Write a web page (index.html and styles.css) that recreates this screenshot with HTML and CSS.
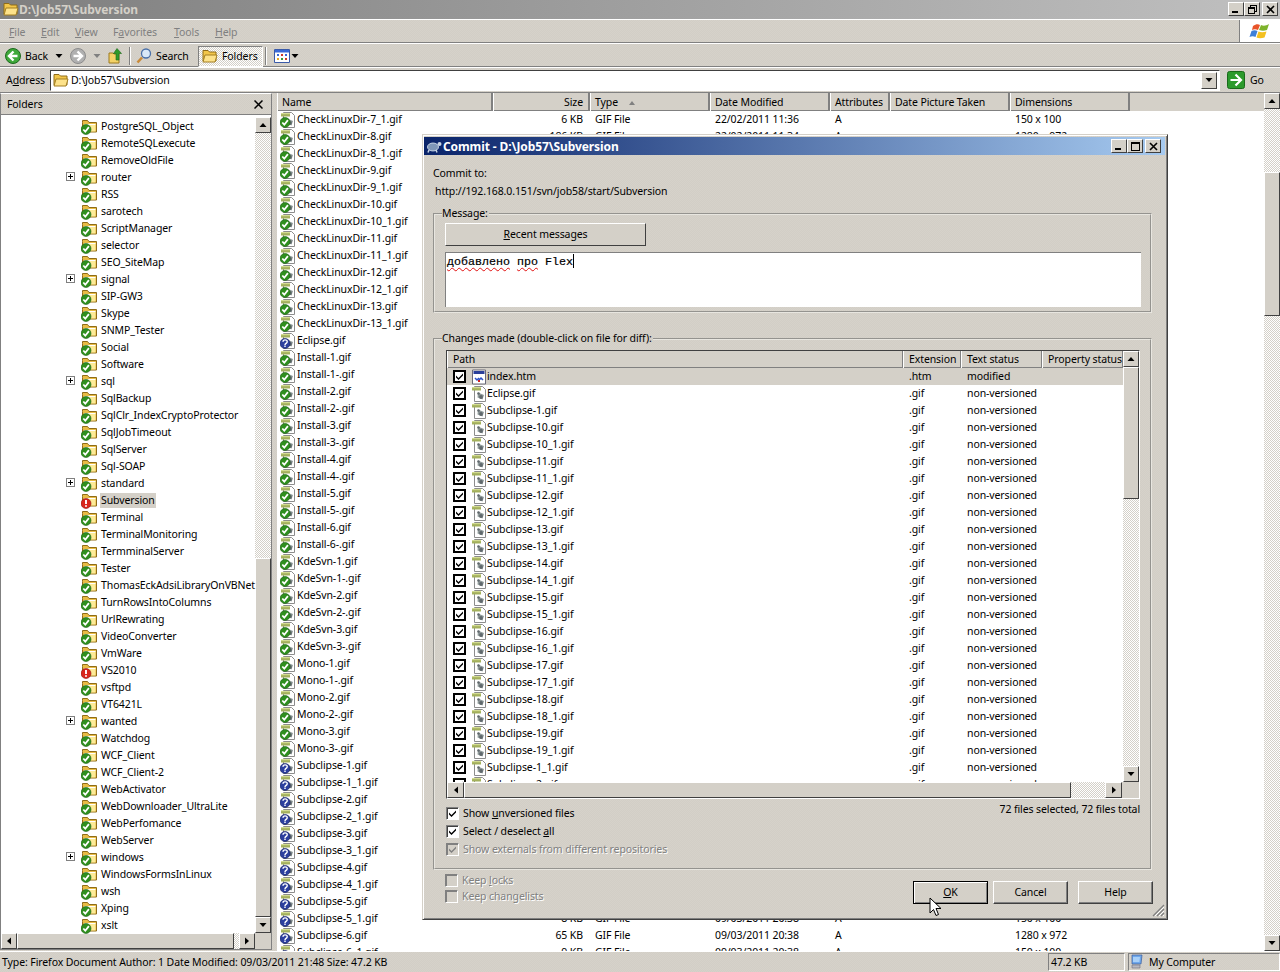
FILE: index.html
```html
<!DOCTYPE html>
<html lang="en">
<head>
<meta charset="utf-8">
<title>D:\Job57\Subversion</title>
<link rel="stylesheet" href="styles.css">
</head>
<body>
<svg class="defs" width="0" height="0">
  <symbol id="fold" viewBox="0 0 16 16"><path d="M1.500 3.500V1.500h5l1.500 2H15.500V13H1.500z" fill="#e9bc45" stroke="#8f6c18"/><path d="M3 5.500h11.500V12.500H3z" fill="#fdeb98"/><path d="M3 5.500h11.500" stroke="#fff"/></symbol>
  <symbol id="ok" viewBox="0 0 16 16"><circle cx="5" cy="10.500" r="5" fill="#2f8f1e" stroke="#1c5f14" stroke-width=".6"/><path d="M2.300 10.500l2 2.200 3.600-4.600" fill="none" stroke="#fff" stroke-width="1.800"/></symbol>
  <symbol id="err" viewBox="0 0 16 16"><circle cx="5" cy="10.500" r="5" fill="#d8261c" stroke="#8c120c" stroke-width=".6"/><path d="M5 7v4M5 12.200v1.500" stroke="#fff" stroke-width="1.900"/></symbol>
  <symbol id="q" viewBox="0 0 16 16"><circle cx="5" cy="10.500" r="5" fill="#2c3f9e" stroke="#16215f" stroke-width=".6"/><path d="M3 8.800c0-2.600 4.200-2.600 4.200-.1 0 1.600-2.200 1.700-2.200 3.200M5 12.500v1.500" fill="none" stroke="#fff" stroke-width="1.400"/></symbol>
  <symbol id="doc" viewBox="0 0 16 16"><path d="M3.500.5h8l3 3v12h-11z" fill="#fff" stroke="#8c8c8c"/><path d="M1 1h9v3.500H1z" fill="#a3b05c"/><path d="M1 1h9v1.200H1z" fill="#d3dc92"/><path d="M7 6.500l6 2.500-1.500 4.500-5-2z" fill="#8f9a9a"/><circle cx="10" cy="11" r="1.900" fill="#60686c"/><circle cx="7.500" cy="7.500" r="1.300" fill="#60686c"/></symbol>
  <symbol id="htm" viewBox="0 0 16 16"><path d="M1.500 1h13v14h-13z" fill="#fff" stroke="#6a6a78"/><path d="M2.500 2h11v3h-11z" fill="#2a3f9a"/><path d="M4 9l2 2 2-2M8 11l2-2 2 2" fill="none" stroke="#2a50c8" stroke-width="1.500"/><path d="M7 11h2v2h-2z" fill="#d02020"/></symbol>
  <symbol id="check" viewBox="0 0 9 9"><path d="M1 3.500l2.500 2.500L8 1.500v2L3.500 8 1 5.500z"/></symbol>
  <symbol id="yf" viewBox="0 0 16 16"><path d="M1 4V2.500h5L7.500 4H14V13H1z" fill="#f2c64a" stroke="#8f6c18"/><path d="M1 14l2-7h12l-2 7z" fill="#fde28a" stroke="#a37f22"/></symbol>
  <symbol id="up" viewBox="0 0 8 8"><path d="M4 2l3.500 4H.5z"/></symbol>
  <symbol id="dn" viewBox="0 0 8 8"><path d="M4 6L.5 2h7z"/></symbol>
  <symbol id="lf" viewBox="0 0 8 8"><path d="M2 4l4-3.500v7z"/></symbol>
  <symbol id="rt" viewBox="0 0 8 8"><path d="M6 4L2 .5v7z"/></symbol>
</svg>

<div class="app">
  <div class="title">
    <svg class="i16"><use href="#yf"/></svg>
    <span class="title-text">D:\Job57\Subversion</span>
    <span class="wbtns">
      <span class="wbtn"><i class="min"></i></span>
      <span class="wbtn"><i class="rest"></i></span>
      <span class="wbtn wclose"><svg width="9" height="9" viewBox="0 0 9 9"><path d="M1 1l7 7M8 1L1 8" stroke="#000" stroke-width="1.600"/></svg></span>
    </span>
  </div>

  <div class="menu">
    <span class="m m1"><u>F</u>ile</span>
    <span class="m m2"><u>E</u>dit</span>
    <span class="m m3"><u>V</u>iew</span>
    <span class="m m4">F<u>a</u>vorites</span>
    <span class="m m5"><u>T</u>ools</span>
    <span class="m m6"><u>H</u>elp</span>
    <span class="flag"><svg width="22" height="20" viewBox="0 0 22 20"><path d="M4 5c3-2 5-2 7-1l-2 5c-2-1-4-1-6 0z" fill="#e8542a"/><path d="M12 4c2 1 5 1 8-1l-2 6c-3 1-5 1-8 0z" fill="#7eb32c"/><path d="M2.500 10c2-1 4-1 6 0l-2 6c-2-1-4-1-6 0z" fill="#3e7fd8"/><path d="M9.500 10.500c2 1 5 1 8 0l-2 6c-3 1-6 1-8 0z" fill="#f4c020"/></svg></span>
  </div>

  <div class="tool">
    <svg class="i16 t-back" viewBox="0 0 16 16"><circle cx="8" cy="8" r="7.500" fill="#3fa83a" stroke="#1d6a1d"/><path d="M8.500 3.500L4 8l4.500 4.500M4.500 8H12.500" fill="none" stroke="#fff" stroke-width="2.400"/></svg>
    <span class="t-backlabel">Back</span>
    <svg class="arrow t-a1"><use href="#dn"/></svg>
    <svg class="i16 t-fwd" viewBox="0 0 16 16"><circle cx="8" cy="8" r="7.500" fill="#b0b0b0" stroke="#8c8c8c"/><path d="M7.500 3.500L12 8l-4.500 4.500M11.500 8H3.500" fill="none" stroke="#fff" stroke-width="2.400"/></svg>
    <svg class="arrow dim t-a2"><use href="#dn"/></svg>
    <svg class="i16 t-up" viewBox="0 0 16 16"><path d="M1 5h4l1 1h5v9H1z" fill="#f4d266" stroke="#9c7b20"/><path d="M9 .5l4.500 5H11V12H8V5.500H5.500z" fill="#2f9a2a" stroke="#1b6a18" stroke-width=".6"/></svg>
    <i class="sep s1"></i>
    <svg class="i16 t-search" viewBox="0 0 16 16"><path d="M6 9.500L1.500 14.500" stroke="#c98b3a" stroke-width="2.600"/><circle cx="10" cy="5.500" r="4.500" fill="#d8e8f8" stroke="#4a70a8" stroke-width="1.300"/></svg>
    <span class="t-searchlabel">Search</span>
    <span class="pressed"><svg class="i16" viewBox="0 0 16 16"><use href="#yf"/></svg><span>Folders</span></span>
    <i class="sep s2"></i>
    <svg class="i16 t-views" viewBox="0 0 16 16"><path d="M.5 1.500h15v13H.5z" fill="#fff" stroke="#3a5aa8"/><path d="M1 2h14v2.500H1z" fill="#3a6ad8"/><path d="M3 6h2v2H3z" fill="#3a6ad8"/><path d="M7 6h2v2H7z" fill="#d03a2a"/><path d="M11 6h2v2h-2z" fill="#3a6ad8"/><path d="M3 10h2v2H3z" fill="#e8a820"/><path d="M7 10h2v2H7z" fill="#3a9a3a"/><path d="M11 10h2v2h-2z" fill="#d03a2a"/></svg>
    <svg class="arrow t-a3"><use href="#dn"/></svg>
  </div>

  <div class="addr">
    <span class="addr-label">A<u>d</u>dress</span>
    <div class="combo">
      <svg class="i16"><use href="#yf"/></svg>
      <span class="combo-text">D:\Job57\Subversion</span>
      <span class="btn3 combo-btn"><svg class="arrow"><use href="#dn"/></svg></span>
    </div>
    <svg class="go-ic" viewBox="0 0 18 18"><rect x=".5" y=".5" width="17" height="17" rx="2" fill="#2c9a2c" stroke="#1a6a1a"/><path d="M8.500 3.500L14 9l-5.500 5.500M13 9H3.500" fill="none" stroke="#fff" stroke-width="2.200"/></svg>
    <span class="go-label">Go</span>
  </div>

  <div class="main">
    <div class="left">
      <div class="left-head"><span>Folders</span><svg width="9" height="9" viewBox="0 0 9 9"><path d="M.5.5l8 8M8.500.5l-8 8" stroke="#000" stroke-width="1.500"/></svg></div>
      <div class="left-body">
        <div class="tree-wrap">
          <ul class="tree">
            <li><svg class="fi"><use href="#fold"/><use href="#ok"/></svg>PostgreSQL_Object</li>
            <li><svg class="fi"><use href="#fold"/><use href="#ok"/></svg>RemoteSQLexecute</li>
            <li><svg class="fi"><use href="#fold"/><use href="#ok"/></svg>RemoveOldFile</li>
            <li><b class="plus"></b><svg class="fi"><use href="#fold"/><use href="#ok"/></svg>router</li>
            <li><svg class="fi"><use href="#fold"/><use href="#ok"/></svg>RSS</li>
            <li><svg class="fi"><use href="#fold"/><use href="#ok"/></svg>sarotech</li>
            <li><svg class="fi"><use href="#fold"/><use href="#ok"/></svg>ScriptManager</li>
            <li><svg class="fi"><use href="#fold"/><use href="#ok"/></svg>selector</li>
            <li><svg class="fi"><use href="#fold"/><use href="#ok"/></svg>SEO_SiteMap</li>
            <li><b class="plus"></b><svg class="fi"><use href="#fold"/><use href="#ok"/></svg>signal</li>
            <li><svg class="fi"><use href="#fold"/><use href="#ok"/></svg>SIP-GW3</li>
            <li><svg class="fi"><use href="#fold"/><use href="#ok"/></svg>Skype</li>
            <li><svg class="fi"><use href="#fold"/><use href="#ok"/></svg>SNMP_Tester</li>
            <li><svg class="fi"><use href="#fold"/><use href="#ok"/></svg>Social</li>
            <li><svg class="fi"><use href="#fold"/><use href="#ok"/></svg>Software</li>
            <li><b class="plus"></b><svg class="fi"><use href="#fold"/><use href="#ok"/></svg>sql</li>
            <li><svg class="fi"><use href="#fold"/><use href="#ok"/></svg>SqlBackup</li>
            <li><svg class="fi"><use href="#fold"/><use href="#ok"/></svg>SqlClr_IndexCryptoProtector</li>
            <li><svg class="fi"><use href="#fold"/><use href="#ok"/></svg>SqlJobTimeout</li>
            <li><svg class="fi"><use href="#fold"/><use href="#ok"/></svg>SqlServer</li>
            <li><svg class="fi"><use href="#fold"/><use href="#ok"/></svg>Sql-SOAP</li>
            <li><b class="plus"></b><svg class="fi"><use href="#fold"/><use href="#ok"/></svg>standard</li>
            <li><svg class="fi"><use href="#fold"/><use href="#err"/></svg><span class="sel">Subversion</span></li>
            <li><svg class="fi"><use href="#fold"/><use href="#ok"/></svg>Terminal</li>
            <li><svg class="fi"><use href="#fold"/><use href="#ok"/></svg>TerminalMonitoring</li>
            <li><svg class="fi"><use href="#fold"/><use href="#ok"/></svg>TermminalServer</li>
            <li><svg class="fi"><use href="#fold"/><use href="#ok"/></svg>Tester</li>
            <li><svg class="fi"><use href="#fold"/><use href="#ok"/></svg>ThomasEckAdsiLibraryOnVBNet</li>
            <li><svg class="fi"><use href="#fold"/><use href="#ok"/></svg>TurnRowsIntoColumns</li>
            <li><svg class="fi"><use href="#fold"/><use href="#ok"/></svg>UrlRewrating</li>
            <li><svg class="fi"><use href="#fold"/><use href="#ok"/></svg>VideoConverter</li>
            <li><svg class="fi"><use href="#fold"/><use href="#ok"/></svg>VmWare</li>
            <li><svg class="fi"><use href="#fold"/><use href="#err"/></svg>VS2010</li>
            <li><svg class="fi"><use href="#fold"/><use href="#ok"/></svg>vsftpd</li>
            <li><svg class="fi"><use href="#fold"/><use href="#ok"/></svg>VT6421L</li>
            <li><b class="plus"></b><svg class="fi"><use href="#fold"/><use href="#ok"/></svg>wanted</li>
            <li><svg class="fi"><use href="#fold"/><use href="#ok"/></svg>Watchdog</li>
            <li><svg class="fi"><use href="#fold"/><use href="#ok"/></svg>WCF_Client</li>
            <li><svg class="fi"><use href="#fold"/><use href="#ok"/></svg>WCF_Client-2</li>
            <li><svg class="fi"><use href="#fold"/><use href="#ok"/></svg>WebActivator</li>
            <li><svg class="fi"><use href="#fold"/><use href="#ok"/></svg>WebDownloader_UltraLite</li>
            <li><svg class="fi"><use href="#fold"/><use href="#ok"/></svg>WebPerfomance</li>
            <li><svg class="fi"><use href="#fold"/><use href="#ok"/></svg>WebServer</li>
            <li><b class="plus"></b><svg class="fi"><use href="#fold"/><use href="#ok"/></svg>windows</li>
            <li><svg class="fi"><use href="#fold"/><use href="#ok"/></svg>WindowsFormsInLinux</li>
            <li><svg class="fi"><use href="#fold"/><use href="#ok"/></svg>wsh</li>
            <li><svg class="fi"><use href="#fold"/><use href="#ok"/></svg>Xping</li>
            <li><svg class="fi"><use href="#fold"/><use href="#ok"/></svg>xslt</li>
          </ul>
          <div class="vsb vsb-left">
            <span class="btn3 sb"><svg class="arrow"><use href="#up"/></svg></span>
            <i class="track grow"></i>
            <i class="btn3 thumb th-left"></i>
            <span class="btn3 sb"><svg class="arrow"><use href="#dn"/></svg></span>
          </div>
        </div>
        <div class="hsb hsb-left">
          <span class="btn3 sb"><svg class="arrow"><use href="#lf"/></svg></span>
          <i class="btn3 thumb th-lh"></i>
          <i class="track grow"></i>
          <span class="btn3 sb"><svg class="arrow"><use href="#rt"/></svg></span>
          <i class="corner"></i>
        </div>
      </div>
    </div>

    <div class="right">
      <div class="list">
        <div class="cols head">
          <span>Name</span><span class="ar">Size</span><span class="sorted">Type<svg class="sort" viewBox="0 0 8 8"><path d="M4 2l3 4H1z"/></svg></span><span>Date Modified</span><span>Attributes</span><span>Date Picture Taken</span><span>Dimensions</span>
        </div>
        <div class="rows">
          <div class="cols row"><span class="nm"><svg class="fi"><use href="#doc"/><use href="#ok"/></svg>CheckLinuxDir-7_1.gif</span><span class="ar">6 KB</span><span>GIF File</span><span>22/02/2011 11:36</span><span>A</span><span></span><span>150 x 100</span></div>
          <div class="cols row"><span class="nm"><svg class="fi"><use href="#doc"/><use href="#ok"/></svg>CheckLinuxDir-8.gif</span><span class="ar">186 KB</span><span>GIF File</span><span>22/02/2011 11:34</span><span>A</span><span></span><span>1280 x 972</span></div>
          <div class="cols row"><span class="nm"><svg class="fi"><use href="#doc"/><use href="#ok"/></svg>CheckLinuxDir-8_1.gif</span></div>
          <div class="cols row"><span class="nm"><svg class="fi"><use href="#doc"/><use href="#ok"/></svg>CheckLinuxDir-9.gif</span></div>
          <div class="cols row"><span class="nm"><svg class="fi"><use href="#doc"/><use href="#ok"/></svg>CheckLinuxDir-9_1.gif</span></div>
          <div class="cols row"><span class="nm"><svg class="fi"><use href="#doc"/><use href="#ok"/></svg>CheckLinuxDir-10.gif</span></div>
          <div class="cols row"><span class="nm"><svg class="fi"><use href="#doc"/><use href="#ok"/></svg>CheckLinuxDir-10_1.gif</span></div>
          <div class="cols row"><span class="nm"><svg class="fi"><use href="#doc"/><use href="#ok"/></svg>CheckLinuxDir-11.gif</span></div>
          <div class="cols row"><span class="nm"><svg class="fi"><use href="#doc"/><use href="#ok"/></svg>CheckLinuxDir-11_1.gif</span></div>
          <div class="cols row"><span class="nm"><svg class="fi"><use href="#doc"/><use href="#ok"/></svg>CheckLinuxDir-12.gif</span></div>
          <div class="cols row"><span class="nm"><svg class="fi"><use href="#doc"/><use href="#ok"/></svg>CheckLinuxDir-12_1.gif</span></div>
          <div class="cols row"><span class="nm"><svg class="fi"><use href="#doc"/><use href="#ok"/></svg>CheckLinuxDir-13.gif</span></div>
          <div class="cols row"><span class="nm"><svg class="fi"><use href="#doc"/><use href="#ok"/></svg>CheckLinuxDir-13_1.gif</span></div>
          <div class="cols row"><span class="nm"><svg class="fi"><use href="#doc"/><use href="#q"/></svg>Eclipse.gif</span></div>
          <div class="cols row"><span class="nm"><svg class="fi"><use href="#doc"/><use href="#ok"/></svg>Install-1.gif</span></div>
          <div class="cols row"><span class="nm"><svg class="fi"><use href="#doc"/><use href="#ok"/></svg>Install-1-.gif</span></div>
          <div class="cols row"><span class="nm"><svg class="fi"><use href="#doc"/><use href="#ok"/></svg>Install-2.gif</span></div>
          <div class="cols row"><span class="nm"><svg class="fi"><use href="#doc"/><use href="#ok"/></svg>Install-2-.gif</span></div>
          <div class="cols row"><span class="nm"><svg class="fi"><use href="#doc"/><use href="#ok"/></svg>Install-3.gif</span></div>
          <div class="cols row"><span class="nm"><svg class="fi"><use href="#doc"/><use href="#ok"/></svg>Install-3-.gif</span></div>
          <div class="cols row"><span class="nm"><svg class="fi"><use href="#doc"/><use href="#ok"/></svg>Install-4.gif</span></div>
          <div class="cols row"><span class="nm"><svg class="fi"><use href="#doc"/><use href="#ok"/></svg>Install-4-.gif</span></div>
          <div class="cols row"><span class="nm"><svg class="fi"><use href="#doc"/><use href="#ok"/></svg>Install-5.gif</span></div>
          <div class="cols row"><span class="nm"><svg class="fi"><use href="#doc"/><use href="#ok"/></svg>Install-5-.gif</span></div>
          <div class="cols row"><span class="nm"><svg class="fi"><use href="#doc"/><use href="#ok"/></svg>Install-6.gif</span></div>
          <div class="cols row"><span class="nm"><svg class="fi"><use href="#doc"/><use href="#ok"/></svg>Install-6-.gif</span></div>
          <div class="cols row"><span class="nm"><svg class="fi"><use href="#doc"/><use href="#ok"/></svg>KdeSvn-1.gif</span></div>
          <div class="cols row"><span class="nm"><svg class="fi"><use href="#doc"/><use href="#ok"/></svg>KdeSvn-1-.gif</span></div>
          <div class="cols row"><span class="nm"><svg class="fi"><use href="#doc"/><use href="#ok"/></svg>KdeSvn-2.gif</span></div>
          <div class="cols row"><span class="nm"><svg class="fi"><use href="#doc"/><use href="#ok"/></svg>KdeSvn-2-.gif</span></div>
          <div class="cols row"><span class="nm"><svg class="fi"><use href="#doc"/><use href="#ok"/></svg>KdeSvn-3.gif</span></div>
          <div class="cols row"><span class="nm"><svg class="fi"><use href="#doc"/><use href="#ok"/></svg>KdeSvn-3-.gif</span></div>
          <div class="cols row"><span class="nm"><svg class="fi"><use href="#doc"/><use href="#ok"/></svg>Mono-1.gif</span></div>
          <div class="cols row"><span class="nm"><svg class="fi"><use href="#doc"/><use href="#ok"/></svg>Mono-1-.gif</span></div>
          <div class="cols row"><span class="nm"><svg class="fi"><use href="#doc"/><use href="#ok"/></svg>Mono-2.gif</span></div>
          <div class="cols row"><span class="nm"><svg class="fi"><use href="#doc"/><use href="#ok"/></svg>Mono-2-.gif</span></div>
          <div class="cols row"><span class="nm"><svg class="fi"><use href="#doc"/><use href="#ok"/></svg>Mono-3.gif</span></div>
          <div class="cols row"><span class="nm"><svg class="fi"><use href="#doc"/><use href="#ok"/></svg>Mono-3-.gif</span></div>
          <div class="cols row"><span class="nm"><svg class="fi"><use href="#doc"/><use href="#q"/></svg>Subclipse-1.gif</span></div>
          <div class="cols row"><span class="nm"><svg class="fi"><use href="#doc"/><use href="#q"/></svg>Subclipse-1_1.gif</span></div>
          <div class="cols row"><span class="nm"><svg class="fi"><use href="#doc"/><use href="#q"/></svg>Subclipse-2.gif</span></div>
          <div class="cols row"><span class="nm"><svg class="fi"><use href="#doc"/><use href="#q"/></svg>Subclipse-2_1.gif</span></div>
          <div class="cols row"><span class="nm"><svg class="fi"><use href="#doc"/><use href="#q"/></svg>Subclipse-3.gif</span></div>
          <div class="cols row"><span class="nm"><svg class="fi"><use href="#doc"/><use href="#q"/></svg>Subclipse-3_1.gif</span></div>
          <div class="cols row"><span class="nm"><svg class="fi"><use href="#doc"/><use href="#q"/></svg>Subclipse-4.gif</span></div>
          <div class="cols row"><span class="nm"><svg class="fi"><use href="#doc"/><use href="#q"/></svg>Subclipse-4_1.gif</span></div>
          <div class="cols row"><span class="nm"><svg class="fi"><use href="#doc"/><use href="#q"/></svg>Subclipse-5.gif</span></div>
          <div class="cols row"><span class="nm"><svg class="fi"><use href="#doc"/><use href="#q"/></svg>Subclipse-5_1.gif</span><span class="ar">8 KB</span><span>GIF File</span><span>09/03/2011 20:38</span><span>A</span><span></span><span>150 x 100</span></div>
          <div class="cols row"><span class="nm"><svg class="fi"><use href="#doc"/><use href="#q"/></svg>Subclipse-6.gif</span><span class="ar">65 KB</span><span>GIF File</span><span>09/03/2011 20:38</span><span>A</span><span></span><span>1280 x 972</span></div>
          <div class="cols row"><span class="nm"><svg class="fi"><use href="#doc"/><use href="#q"/></svg>Subclipse-6_1.gif</span><span class="ar">9 KB</span><span>GIF File</span><span>09/03/2011 20:38</span><span>A</span><span></span><span>150 x 100</span></div>
        </div>
      </div>
      <div class="vsb vsb-right">
        <span class="btn3 sb"><svg class="arrow"><use href="#up"/></svg></span>
        <i class="track tr-r1"></i>
        <i class="btn3 thumb th-r"></i>
        <i class="track grow"></i>
        <span class="btn3 sb"><svg class="arrow"><use href="#dn"/></svg></span>
      </div>
    </div>
  </div>

  <div class="status">
    <span class="st-main">Type: Firefox Document Author: 1 Date Modified: 09/03/2011 21:48 Size: 47.2 KB</span>
    <span class="st-size">47.2 KB</span>
    <span class="st-comp"><svg class="i16" viewBox="0 0 16 16"><path d="M3 1h10l-1 9H3z" fill="#6fa8ec" stroke="#3a5a9a" stroke-width=".7"/><path d="M4 3h7l-.6 5H4z" fill="#a8d0f8"/><path d="M3 11h8v3H3z" fill="#b8b8c0" stroke="#70707a" stroke-width=".6"/></svg>My Computer</span>
  </div>

  <div class="dialog">
    <div class="dlg-title">
      <svg class="turtle" viewBox="0 0 16 14"><ellipse cx="7" cy="8" rx="5.500" ry="4" fill="#7f97b8" stroke="#dfe8f4" stroke-width=".8"/><circle cx="13.500" cy="5" r="2" fill="#c8d4e4"/><path d="M3 11l-1 2.500M10 11l1 2.500" stroke="#c8d4e4" stroke-width="1.500"/></svg>
      <span class="dlg-name">Commit - D:\Job57\Subversion</span>
      <span class="wbtns dlg-btns">
        <span class="wbtn"><i class="min"></i></span>
        <span class="wbtn"><i class="max"></i></span>
        <span class="wbtn wclose"><svg width="9" height="9" viewBox="0 0 9 9"><path d="M1 1l7 7M8 1L1 8" stroke="#000" stroke-width="1.600"/></svg></span>
      </span>
    </div>
    <div class="dlg-body">
      <div class="commit-to">Commit to:</div>
      <div class="url">http://192.168.0.151/svn/job58/start/Subversion</div>
      <fieldset class="grp grp-msg">
        <legend>Message:</legend>
        <span class="btn3 recent"><span><u>R</u>ecent messages</span></span>
        <div class="msg"><span class="sp">добавлено</span> <span class="sp">про</span> Flex<i class="caret"></i></div>
      </fieldset>
      <fieldset class="grp grp-chg">
        <legend>Changes made (double-click on file for diff):</legend>
        <div class="flist">
          <div class="flist-top">
            <div class="flist-main">
              <div class="fcols fhead"><span>Path</span><span>Extension</span><span>Text status</span><span>Property status</span></div>
              <div class="frows">
                <div class="fcols frow cur"><span class="fn"><i class="cb"><svg><use href="#check"/></svg></i><svg class="fi2"><use href="#htm"/></svg>index.htm</span><span>.htm</span><span>modified</span></div>
                <div class="fcols frow"><span class="fn"><i class="cb"><svg><use href="#check"/></svg></i><svg class="fi2"><use href="#doc"/></svg>Eclipse.gif</span><span>.gif</span><span>non-versioned</span></div>
                <div class="fcols frow"><span class="fn"><i class="cb"><svg><use href="#check"/></svg></i><svg class="fi2"><use href="#doc"/></svg>Subclipse-1.gif</span><span>.gif</span><span>non-versioned</span></div>
                <div class="fcols frow"><span class="fn"><i class="cb"><svg><use href="#check"/></svg></i><svg class="fi2"><use href="#doc"/></svg>Subclipse-10.gif</span><span>.gif</span><span>non-versioned</span></div>
                <div class="fcols frow"><span class="fn"><i class="cb"><svg><use href="#check"/></svg></i><svg class="fi2"><use href="#doc"/></svg>Subclipse-10_1.gif</span><span>.gif</span><span>non-versioned</span></div>
                <div class="fcols frow"><span class="fn"><i class="cb"><svg><use href="#check"/></svg></i><svg class="fi2"><use href="#doc"/></svg>Subclipse-11.gif</span><span>.gif</span><span>non-versioned</span></div>
                <div class="fcols frow"><span class="fn"><i class="cb"><svg><use href="#check"/></svg></i><svg class="fi2"><use href="#doc"/></svg>Subclipse-11_1.gif</span><span>.gif</span><span>non-versioned</span></div>
                <div class="fcols frow"><span class="fn"><i class="cb"><svg><use href="#check"/></svg></i><svg class="fi2"><use href="#doc"/></svg>Subclipse-12.gif</span><span>.gif</span><span>non-versioned</span></div>
                <div class="fcols frow"><span class="fn"><i class="cb"><svg><use href="#check"/></svg></i><svg class="fi2"><use href="#doc"/></svg>Subclipse-12_1.gif</span><span>.gif</span><span>non-versioned</span></div>
                <div class="fcols frow"><span class="fn"><i class="cb"><svg><use href="#check"/></svg></i><svg class="fi2"><use href="#doc"/></svg>Subclipse-13.gif</span><span>.gif</span><span>non-versioned</span></div>
                <div class="fcols frow"><span class="fn"><i class="cb"><svg><use href="#check"/></svg></i><svg class="fi2"><use href="#doc"/></svg>Subclipse-13_1.gif</span><span>.gif</span><span>non-versioned</span></div>
                <div class="fcols frow"><span class="fn"><i class="cb"><svg><use href="#check"/></svg></i><svg class="fi2"><use href="#doc"/></svg>Subclipse-14.gif</span><span>.gif</span><span>non-versioned</span></div>
                <div class="fcols frow"><span class="fn"><i class="cb"><svg><use href="#check"/></svg></i><svg class="fi2"><use href="#doc"/></svg>Subclipse-14_1.gif</span><span>.gif</span><span>non-versioned</span></div>
                <div class="fcols frow"><span class="fn"><i class="cb"><svg><use href="#check"/></svg></i><svg class="fi2"><use href="#doc"/></svg>Subclipse-15.gif</span><span>.gif</span><span>non-versioned</span></div>
                <div class="fcols frow"><span class="fn"><i class="cb"><svg><use href="#check"/></svg></i><svg class="fi2"><use href="#doc"/></svg>Subclipse-15_1.gif</span><span>.gif</span><span>non-versioned</span></div>
                <div class="fcols frow"><span class="fn"><i class="cb"><svg><use href="#check"/></svg></i><svg class="fi2"><use href="#doc"/></svg>Subclipse-16.gif</span><span>.gif</span><span>non-versioned</span></div>
                <div class="fcols frow"><span class="fn"><i class="cb"><svg><use href="#check"/></svg></i><svg class="fi2"><use href="#doc"/></svg>Subclipse-16_1.gif</span><span>.gif</span><span>non-versioned</span></div>
                <div class="fcols frow"><span class="fn"><i class="cb"><svg><use href="#check"/></svg></i><svg class="fi2"><use href="#doc"/></svg>Subclipse-17.gif</span><span>.gif</span><span>non-versioned</span></div>
                <div class="fcols frow"><span class="fn"><i class="cb"><svg><use href="#check"/></svg></i><svg class="fi2"><use href="#doc"/></svg>Subclipse-17_1.gif</span><span>.gif</span><span>non-versioned</span></div>
                <div class="fcols frow"><span class="fn"><i class="cb"><svg><use href="#check"/></svg></i><svg class="fi2"><use href="#doc"/></svg>Subclipse-18.gif</span><span>.gif</span><span>non-versioned</span></div>
                <div class="fcols frow"><span class="fn"><i class="cb"><svg><use href="#check"/></svg></i><svg class="fi2"><use href="#doc"/></svg>Subclipse-18_1.gif</span><span>.gif</span><span>non-versioned</span></div>
                <div class="fcols frow"><span class="fn"><i class="cb"><svg><use href="#check"/></svg></i><svg class="fi2"><use href="#doc"/></svg>Subclipse-19.gif</span><span>.gif</span><span>non-versioned</span></div>
                <div class="fcols frow"><span class="fn"><i class="cb"><svg><use href="#check"/></svg></i><svg class="fi2"><use href="#doc"/></svg>Subclipse-19_1.gif</span><span>.gif</span><span>non-versioned</span></div>
                <div class="fcols frow"><span class="fn"><i class="cb"><svg><use href="#check"/></svg></i><svg class="fi2"><use href="#doc"/></svg>Subclipse-1_1.gif</span><span>.gif</span><span>non-versioned</span></div>
                <div class="fcols frow"><span class="fn"><i class="cb"><svg><use href="#check"/></svg></i><svg class="fi2"><use href="#doc"/></svg>Subclipse-2.gif</span><span>.gif</span><span>non-versioned</span></div>
              </div>
            </div>
            <div class="vsb vsb-dlg">
              <span class="btn3 sb"><svg class="arrow"><use href="#up"/></svg></span>
              <i class="btn3 thumb th-d"></i>
              <i class="track grow"></i>
              <span class="btn3 sb"><svg class="arrow"><use href="#dn"/></svg></span>
            </div>
          </div>
          <div class="hsb hsb-dlg">
            <span class="btn3 sb"><svg class="arrow"><use href="#lf"/></svg></span>
            <i class="btn3 thumb th-dh"></i>
            <i class="track grow"></i>
            <span class="btn3 sb"><svg class="arrow"><use href="#rt"/></svg></span>
          </div>
        </div>
        <div class="below">
          <div class="opts">
            <label class="opt"><i class="cb2"><svg><use href="#check"/></svg></i><span>Show <u>u</u>nversioned files</span></label>
            <label class="opt"><i class="cb2"><svg><use href="#check"/></svg></i><span>Select / deselect <u>a</u>ll</span></label>
            <label class="opt dis"><i class="cb2 cbdis"><svg><use href="#check"/></svg></i><span>Show externals from different repositories</span></label>
          </div>
          <span class="count">72 files selected, 72 files total</span>
        </div>
      </fieldset>
      <div class="foot">
        <div class="keeps">
          <label class="opt2 dis"><i class="cb2 cbempty"></i><span>Keep <u>l</u>ocks</span></label>
          <label class="opt2 dis"><i class="cb2 cbempty"></i><span>Keep changelists</span></label>
        </div>
        <div class="btns">
          <span class="pbtn def"><span><u>O</u>K</span></span>
          <span class="pbtn"><span>Cancel</span></span>
          <span class="pbtn help"><span>Help</span></span>
        </div>
      </div>
    </div>
    <svg class="grip" width="13" height="13" viewBox="0 0 13 13"><path d="M12 1L1 12M12 5L5 12M12 9L9 12" stroke="#808080" stroke-width="1.300"/><path d="M12 3L3 12M12 7L7 12M12 11L11 12" stroke="#fff"/></svg>
  </div>

  <svg class="cursor" width="14" height="21" viewBox="0 0 14 21"><path d="M1 1v15l3.500-3.500 2.500 6 2.500-1-2.500-6H12z" fill="#fff" stroke="#000"/></svg>
</div>
</body>
</html>
```

FILE: styles.css
```css
:root { --tex: repeating-conic-gradient(#d2cec6 0 25%, #d6d2ca 0 50%) 0 0/2px 2px; --chk: repeating-conic-gradient(#fff 0 25%, #d4d0c8 0 50%) 0 0/2px 2px; }
* { box-sizing: border-box; }
html, body { margin: 0; padding: 0; }
body { width: 1280px; height: 972px; overflow: hidden; font: 10.500px/13px "Noto Sans", "Liberation Sans", sans-serif; letter-spacing: -.1px; color: #000; background: #d4d0c8; }
.defs { position: absolute; }
i, b { display: block; font-style: normal; }
u { text-underline-offset: 1px; }

.app { position: relative; width: 1280px; height: 972px; display: flex; flex-direction: column; overflow: hidden; }
.i16 { width: 16px; height: 16px; flex: none; }
.arrow { width: 8px; height: 8px; flex: none; fill: #000; display: block; }
.arrow.dim { fill: #808080; }

.title { height: 19px; flex: none; display: flex; align-items: center; padding: 0 2px 1px 3px; background: linear-gradient(90deg, #7f7f7f, #c0c0c0); }
.title-text { font: bold 12px/13px "Noto Sans", sans-serif; color: #d4d0c8; }
.wbtns { margin-left: auto; display: flex; }
.wclose { margin-left: 2px; }
.wbtn { width: 16px; height: 14px; display: flex; align-items: center; justify-content: center; position: relative; background: #d4d0c8; border: 1px solid; border-color: #fff #404040 #404040 #fff; }
.min { width: 6px; height: 2px; background: #000; margin-top: 6px; margin-right: 2px; }
.max { width: 9px; height: 9px; border: 1px solid #000; border-top-width: 2px; }
.rest { width: 7px; height: 7px; border: 1px solid #000; border-top-width: 2px; background: #d4d0c8; margin: 2px 2px 0 0; box-shadow: 2px -2px 0 -1px #d4d0c8, 2px -2px 0 0 #000; }

.menu { height: 24px; flex: none; display: flex; align-items: center; position: relative; border-top: 1px solid #fff; border-bottom: 1px solid #808080; color: #808080; background: var(--tex); }
.m { position: absolute; top: 6px; }
.m1 { left: 9px; } .m2 { left: 41px; } .m3 { left: 75px; } .m4 { left: 113px; } .m5 { left: 174px; } .m6 { left: 215px; }
.flag { margin-left: auto; width: 41px; height: 22px; background: #fff; display: flex; align-items: center; justify-content: center; border-left: 1px solid #808080; }

.tool { height: 24px; flex: none; display: flex; align-items: center; padding-top: 2px; border-top: 1px solid #fff; border-bottom: 1px solid #808080; background: var(--tex); }
.t-back { margin-left: 5px; }
.t-backlabel { margin-left: 4px; width: 24px; }
.t-a1 { margin-left: 6px; }
.t-fwd { margin-left: 7px; }
.t-a2 { margin-left: 7px; }
.t-up { margin-left: 7px; }
.sep { width: 2px; height: 18px; border-left: 1px solid #808080; border-right: 1px solid #fff; flex: none; }
.s1 { margin-left: 5px; }
.t-search { margin-left: 5px; }
.t-searchlabel { margin-left: 4px; width: 32px; }
.pressed { margin-left: 10px; height: 21px; width: 65px; display: flex; align-items: center; gap: 4px; padding-left: 3px; border: 1px solid; border-color: #808080 #fff #fff #808080; background: var(--chk); }
.s2 { margin-left: 2px; }
.t-views { margin-left: 7px; }
.t-a3 { margin-left: 1px; }

.addr { height: 25px; flex: none; display: flex; align-items: center; border-top: 1px solid #fff; background: var(--tex); }
.addr-label { margin-left: 6px; width: 44px; }
.combo { width: 1170px; height: 21px; display: flex; align-items: center; background: #fff; padding-left: 2px; border: 1px solid; border-color: #404040 #fff #fff #404040; }
.combo-text { margin-left: 2px; }
.combo-btn { margin-left: auto; margin-right: 2px; width: 16px; height: 17px; }
.go-ic { margin-left: 7px; width: 18px; height: 18px; }
.go-label { margin-left: 5px; }
.btn3 { display: flex; align-items: center; justify-content: center; flex: none; background: #d4d0c8; border: 1px solid; border-color: #fff #404040 #404040 #fff; }

.main { height: 859px; flex: none; display: flex; background: var(--tex); border-top: 1px solid #808080; }
.left { width: 272px; flex: none; display: flex; flex-direction: column; border: 1px solid; border-color: #fff #808080 #808080 #808080; margin: 0 0 1px 0; }
.left-head { height: 21px; flex: none; display: flex; align-items: center; justify-content: space-between; padding: 0 8px 0 6px; border-bottom: 1px solid #808080; }
.left-body { flex: 1; min-height: 0; display: flex; flex-direction: column; background: #fff; }
.tree-wrap { flex: 1; min-height: 0; display: flex; padding-top: 2px; }
.tree { list-style: none; margin: 0; padding: 1px 0 0; flex: 1; min-width: 0; }
.tree li { height: 17px; display: flex; align-items: center; padding-left: 80px; position: relative; white-space: nowrap; }
.fi { width: 16px; height: 16px; flex: none; margin-right: 4px; }
.plus { position: absolute; left: 65px; top: 3px; width: 9px; height: 9px; border: 1px solid #808080; background: linear-gradient(#000, #000) center/5px 1px no-repeat, linear-gradient(#000, #000) center/1px 5px no-repeat, #fff; }
.sel { background: #d4d0c8; padding: 1px; margin: 0 -1px; }
.vsb { width: 16px; flex: none; display: flex; flex-direction: column; }
.sb { width: 16px; height: 16px; }
.hsb { height: 16px; flex: none; display: flex; }
.hsb .sb { height: 16px; }
.track { background: var(--chk); flex: none; }
.grow { flex: 1; min-height: 0; min-width: 0; }
.th-left { height: 359px; }
.th-lh { width: 217px; }
.corner { width: 16px; flex: none; background: #d4d0c8; }

.right { flex: 1; min-width: 0; display: flex; margin-left: 5px; }
.list { flex: 1; min-width: 0; background: #fff; display: flex; flex-direction: column; overflow: hidden; }
.cols { display: grid; grid-template-columns: 216px 97px 120px 120px 60px 120px 120px; }
.head { height: 18px; flex: none; background: #d4d0c8; }
.head span { border-right: 2px solid #808080; padding: 3px 5px 0 4px; white-space: nowrap; border-left: 1px solid #fff; box-shadow: inset 0 -1px 0 #808080; }
.head .ar { text-align: right; }
.sorted { display: flex; align-items: flex-start; }
.sort { width: 8px; height: 8px; fill: #808080; margin: 3px 0 0 10px; }
.rows { flex: 1; min-height: 0; overflow: hidden; }
.row { height: 17px; align-items: center; white-space: nowrap; }
.row span { padding-left: 5px; }
.row .nm { display: flex; align-items: center; padding-left: 3px; }
.row .fi { margin-right: 1px; }
.row .ar { text-align: right; padding-right: 7px; }
.vsb-right { background: #d4d0c8; }
.tr-r1 { height: 63px; }
.th-r { height: 144px; }

.status { height: 21px; flex: none; display: flex; align-items: center; position: relative; border-top: 1px solid #fff; background: var(--tex); }
.st-main { margin-left: 2px; width: 1046px; }
.st-size { width: 77px; height: 18px; padding: 2px 0 0 2px; border: 1px solid; border-color: #808080 #fff #fff #808080; }
.st-comp { margin-left: 3px; flex: 1; height: 18px; display: flex; align-items: center; gap: 4px; border: 1px solid; border-color: #808080 #fff #fff #808080; }

.dialog { position: absolute; left: 422px; top: 134px; width: 746px; height: 786px; background: var(--tex); border: 1px solid; border-color: #d4d0c8 #404040 #404040 #d4d0c8; box-shadow: inset 1px 1px 0 #fff, inset -1px -1px 0 #808080; padding: 2px 2px 2px 1px; }
.dlg-title { height: 18px; display: flex; align-items: center; padding: 0 4px 0 2px; background: linear-gradient(90deg, #0a246a, #a6caf0); color: #fff; }
.turtle { width: 16px; height: 14px; flex: none; }
.dlg-name { margin-left: 1px; font: bold 12px/13px "Noto Sans", sans-serif; }
.dlg-btns { margin-left: auto; }
.dlg-body { padding: 12px 13px 0 9px; }
.commit-to { height: 14px; }
.url { height: 14px; margin: 4px 0 0 2px; }
.grp { margin: 0; padding: 0; border: 2px groove #e8e6e0; min-width: 0; }
.grp legend { padding: 0 1px 0 0; height: 13px; line-height: 13px; }
.grp-msg { margin-top: 8px; height: 106px; padding: 3px 9px 0 10px; }
.grp-msg legend { margin-left: -3px; }
.recent { width: 201px; height: 23px; }
.msg { height: 55px; margin-top: 6px; background: #fff; padding: 1px 0 0 1px; font: 11.670px/14px "Liberation Mono", monospace; letter-spacing: 0; -webkit-text-stroke: .2px #000; border-left: 1px solid #808080; border-top: 1px solid #808080; white-space: pre; display: block; }
.sp { text-decoration: underline wavy #e01010 1px; text-underline-offset: 2px; }
.caret { display: inline-block; width: 1px; height: 14px; background: #000; vertical-align: -3px; }
.grp-chg { margin-top: 19px; height: 538px; padding: 5px 11px 0 11px; }
.grp-chg legend { margin-left: -4px; }
.flist { width: 694px; height: 449px; border: 1px solid; border-color: #404040 #fff #fff #404040; background: #fff; display: flex; flex-direction: column; }
.flist-top { flex: 1; min-height: 0; display: flex; }
.flist-main { flex: 1; min-width: 0; display: flex; flex-direction: column; overflow: hidden; }
.fcols { display: grid; grid-template-columns: 456px 58px 81px 1fr; }
.fhead { height: 17px; flex: none; background: #d4d0c8; }
.fhead span { padding: 2px 0 0 5px; border-left: 1px solid #fff; border-right: 1px solid #808080; box-shadow: inset 0 -1px 0 #808080; white-space: nowrap; overflow: hidden; }
.frows { flex: 1; min-height: 0; overflow: hidden; }
.frow { height: 17px; align-items: center; white-space: nowrap; }
.frow span { padding-left: 6px; }
.frow .fn { display: flex; align-items: center; padding-left: 6px; }
.cur { background: #d4d0c8; }
.cb { width: 13px; height: 13px; border: 2px solid #000; background: #fff; display: flex; align-items: center; justify-content: center; flex: none; }
.cb svg, .cb2 svg { width: 9px; height: 9px; display: block; }
.fi2 { width: 16px; height: 16px; flex: none; margin-left: 5px; }
.vsb-dlg { background: #d4d0c8; }
.th-d { height: 132px; }
.th-dh { width: 607px; }
.hsb-dlg { height: 16px; padding-right: 17px; background: #d4d0c8; }
.hsb-dlg .sb { height: 16px; width: 17px; }
.below { display: flex; justify-content: space-between; margin-top: 4px; }
.opts { display: flex; flex-direction: column; gap: 5px; padding-top: 4px; }
.opt { height: 13px; display: flex; align-items: center; gap: 4px; white-space: nowrap; }
.opt2 { height: 13px; display: flex; align-items: center; gap: 4px; white-space: nowrap; }
.cb2 { width: 13px; height: 13px; flex: none; background: #fff; border: 1px solid; border-color: #808080 #fff #fff #808080; display: flex; align-items: center; justify-content: center; box-shadow: inset 1px 1px 0 #404040; }
.cbdis { background: #d4d0c8; box-shadow: inset 1px 1px 0 #808080; fill: #808080; }
.cbempty { background: #d4d0c8; box-shadow: inset 1px 1px 0 #808080; }
.dis { color: #808080; text-shadow: 1px 1px 0 #fff; }
.count { white-space: nowrap; margin-right: -1px; }
.foot { display: flex; justify-content: space-between; margin-top: 4px; }
.keeps { display: flex; flex-direction: column; gap: 3px; padding: 0 0 0 12px; }
.btns { display: flex; gap: 5px; margin-top: 7px; margin-right: -1px; }
.pbtn { width: 75px; height: 23px; display: flex; align-items: center; justify-content: center; background: #d4d0c8; border: 1px solid; border-color: #fff #404040 #404040 #fff; box-shadow: inset -1px -1px 0 #808080; }
.def { border: 1px solid #000; box-shadow: inset 1px 1px 0 #fff, inset -1px -1px 0 #808080; }
.help { margin-left: 5px; }
.grip { position: absolute; right: 2px; bottom: 2px; }
.cursor { position: absolute; left: 929px; top: 897px; }
```
